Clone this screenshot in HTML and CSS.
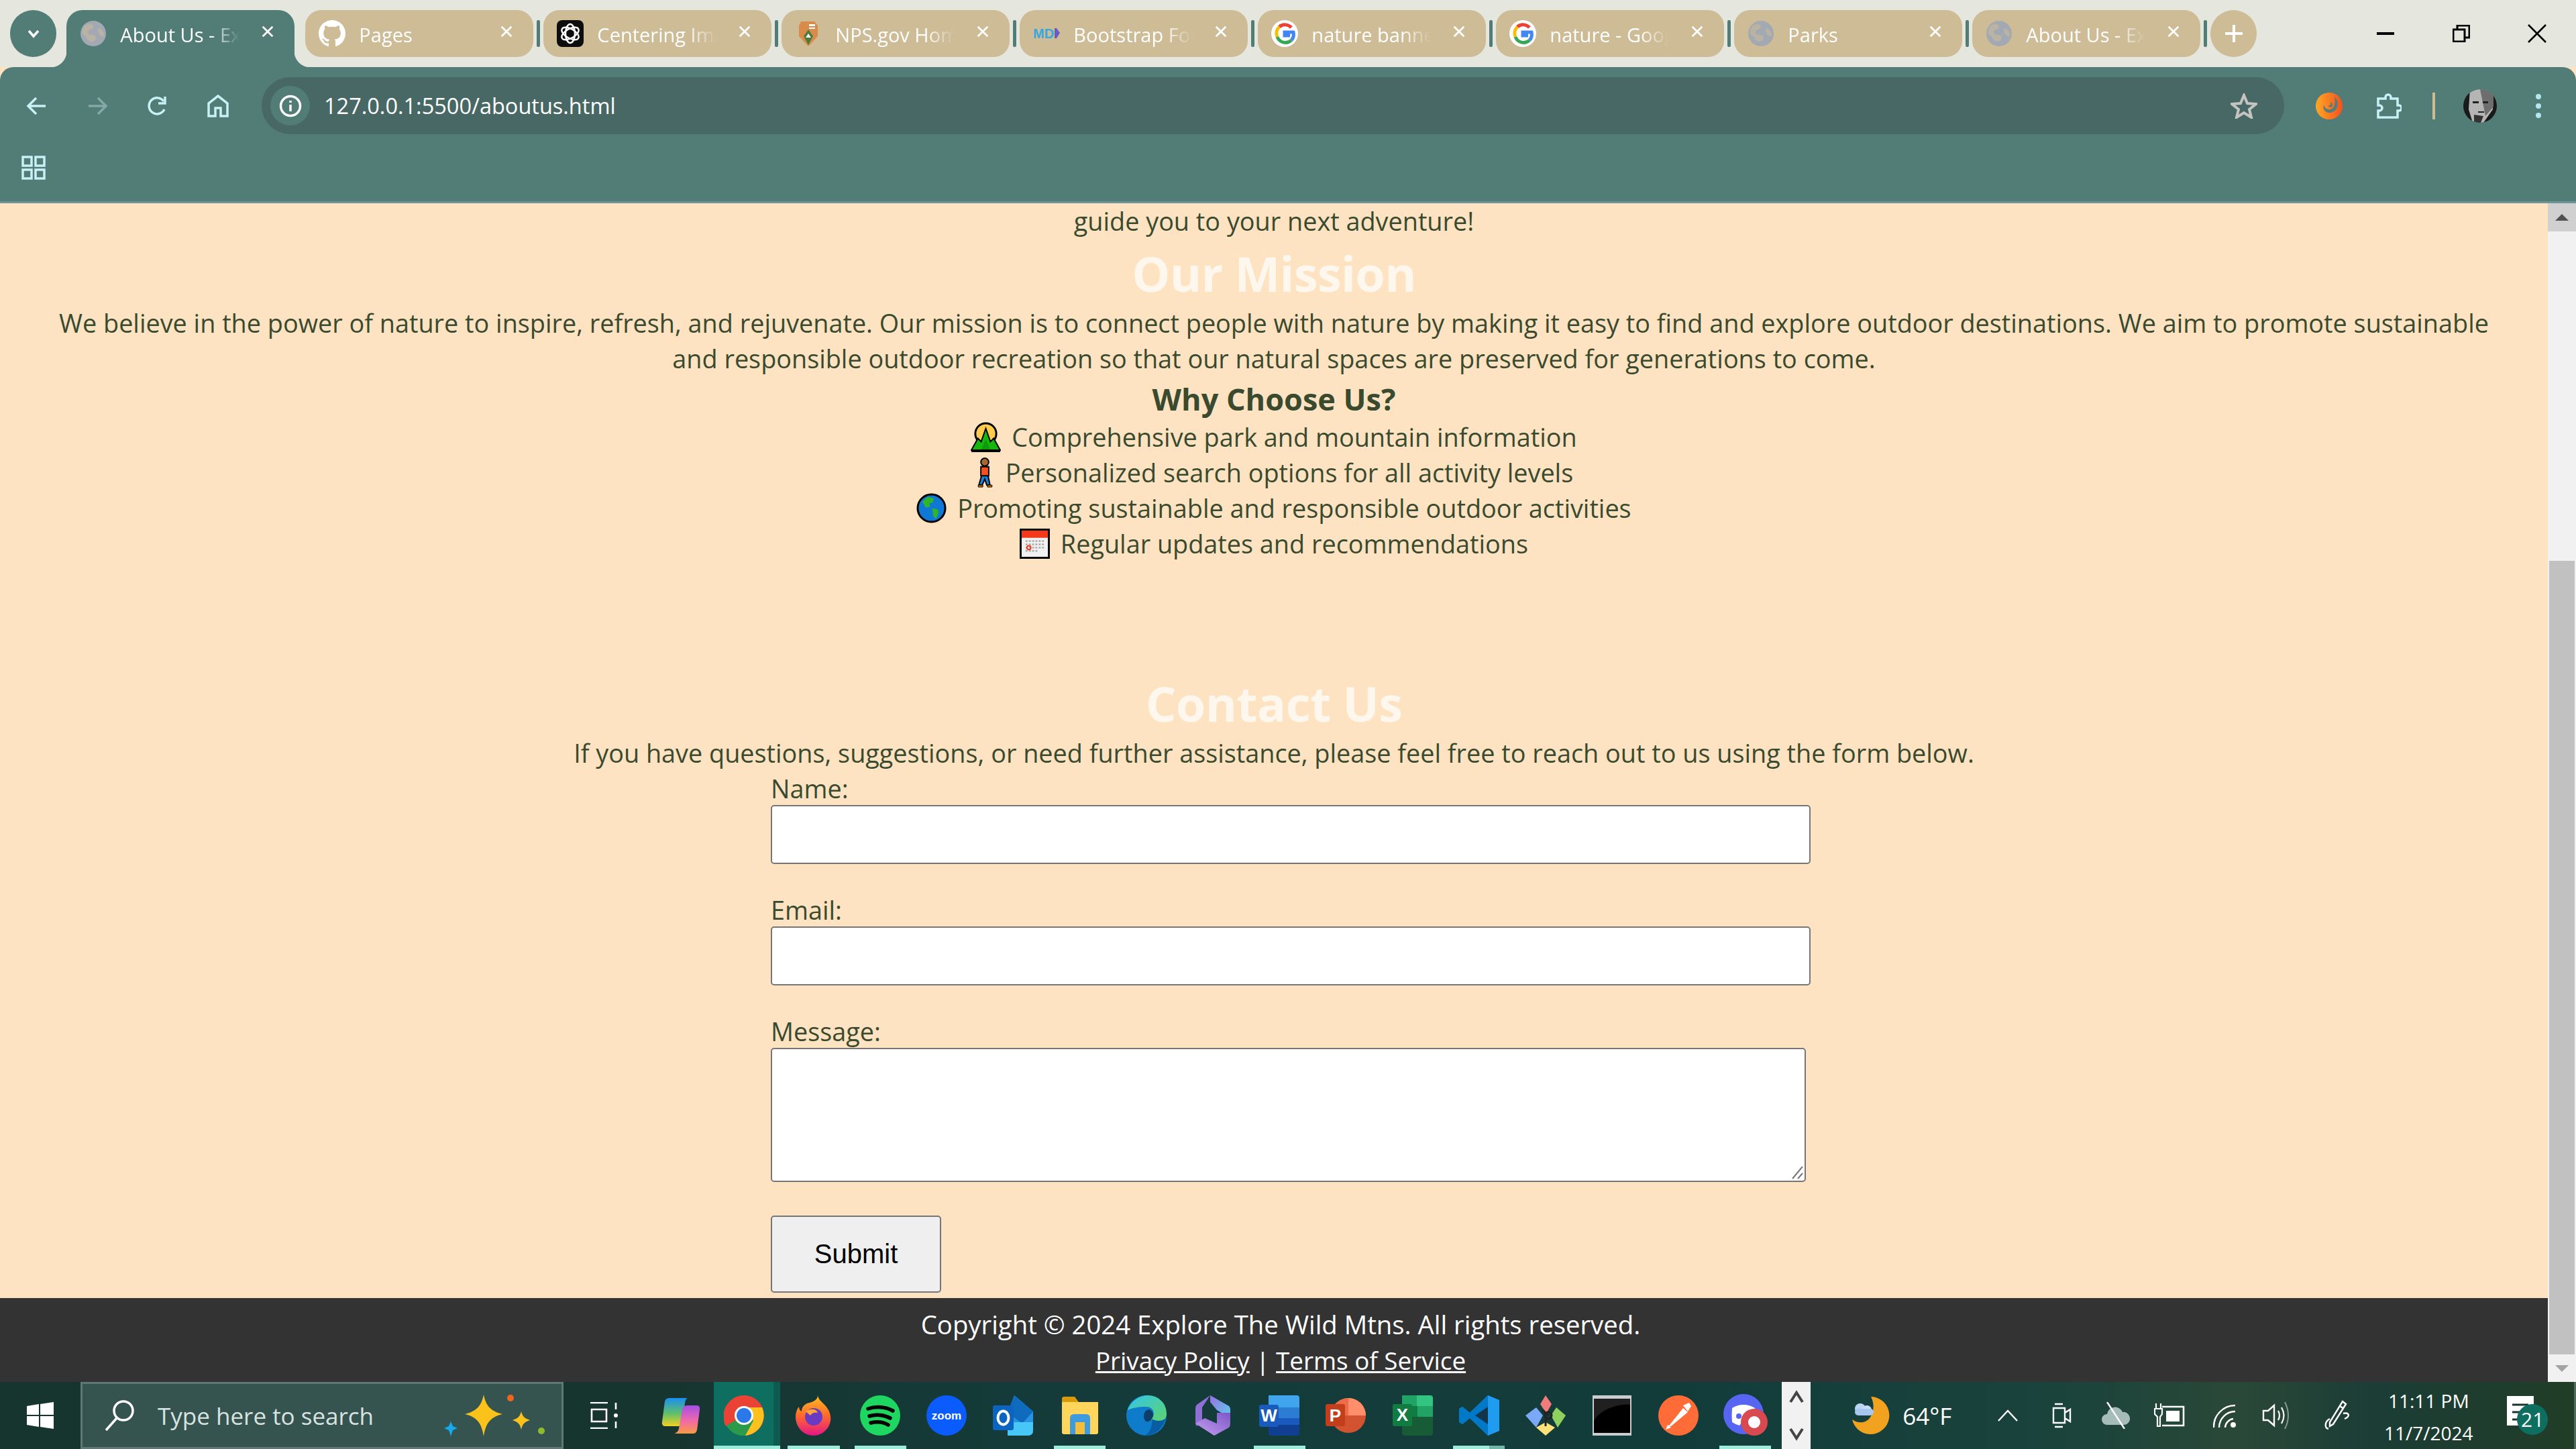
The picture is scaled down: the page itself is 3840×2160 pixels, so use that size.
FILE: index.html
```html
<!DOCTYPE html>
<html lang="en">
<head>
  <meta charset="UTF-8" />
  <title>About Us - Explore The Wild Mtns</title>
  <link rel="stylesheet" href="styles.css">
</head>
<body>

<svg class="defs" width="0" height="0">
  <symbol id="globe" viewBox="0 0 40 40">
    <circle cx="20" cy="20" r="19" fill="#a3a9b3"/>
    <path d="M8 8c6-4 12-2 12 2s-8 3-8 8 6 3 10 5 1 8-3 9c-5 0-8-3-9-6s-5-3-6-6 1-9 4-12zM29 12c3 1 7 6 7 10s-4 2-6 0-5-8-1-10z" fill="#cdbc96" opacity=".55"/>
  </symbol>
  <symbol id="gmark" viewBox="0 0 40 40">
    <circle cx="20" cy="20" r="20" fill="#fff"/>
    <path d="M30 11a13 13 0 0 0-18-1" fill="none" stroke="#ea4335" stroke-width="5"/>
    <path d="M12 10a13 13 0 0 0 -3 15" fill="none" stroke="#fbbc05" stroke-width="5"/>
    <path d="M9 25a13 13 0 0 0 21 5" fill="none" stroke="#34a853" stroke-width="5"/>
    <path d="M30 30a13 13 0 0 0 3-12H20v5h8" fill="none" stroke="#4285f4" stroke-width="5"/>
  </symbol>
  <symbol id="xmark" viewBox="0 0 24 24">
    <path d="M4 4l16 16M20 4L4 20" fill="none" stroke="currentColor" stroke-width="3"/>
  </symbol>
</svg>

<div class="tabstrip">
  <div class="tab-toggle">
    <svg width="24" height="24" viewBox="0 0 24 24"><path d="M5 8l7 8 7-8" fill="none" stroke="#fff" stroke-width="3.5"/></svg>
  </div>
  <div class="tab tab-active">
    <svg class="fav" viewBox="0 0 40 40"><use href="#globe"/></svg>
    <span class="tab-title">About Us - Explore</span>
    <svg class="tab-close"><use href="#xmark"/></svg>
  </div>
  <div class="tab">
    <svg class="fav" viewBox="0 0 16 16"><path fill="#fff" d="M8 0C3.58 0 0 3.58 0 8c0 3.54 2.29 6.53 5.47 7.59.4.07.55-.17.55-.38 0-.19-.01-.82-.01-1.49-2.01.37-2.53-.49-2.69-.94-.09-.23-.48-.94-.82-1.13-.28-.15-.68-.52-.01-.53.63-.01 1.08.58 1.23.82.72 1.21 1.87.87 2.33.66.07-.52.28-.87.51-1.07-1.78-.2-3.64-.89-3.64-3.95 0-.87.31-1.59.82-2.15-.08-.2-.36-1.02.08-2.12 0 0 .67-.21 2.2.82.64-.18 1.32-.27 2-.27.68 0 1.36.09 2 .27 1.53-1.04 2.2-.82 2.2-.82.44 1.1.16 1.92.08 2.12.51.56.82 1.27.82 2.15 0 3.07-1.87 3.75-3.65 3.95.29.25.54.73.54 1.48 0 1.07-.01 1.93-.01 2.2 0 .21.15.46.55.38A8.013 8.013 0 0016 8c0-4.42-3.58-8-8-8z"/></svg>
    <span class="tab-title">Pages</span>
    <svg class="tab-close"><use href="#xmark"/></svg>
  </div>
  <div class="tab-sep"></div>
  <div class="tab">
    <svg class="fav" viewBox="0 0 40 40"><rect width="40" height="40" rx="8" fill="#0d0d0d"/><g fill="none" stroke="#fff" stroke-width="2.4"><ellipse cx="20" cy="20" rx="7" ry="14"/><ellipse cx="20" cy="20" rx="7" ry="14" transform="rotate(60 20 20)"/><ellipse cx="20" cy="20" rx="7" ry="14" transform="rotate(120 20 20)"/></g></svg>
    <span class="tab-title">Centering Images</span>
    <svg class="tab-close"><use href="#xmark"/></svg>
  </div>
  <div class="tab-sep"></div>
  <div class="tab">
    <svg class="fav" viewBox="0 0 40 40"><path d="M9 2h20l5 6v16L20 39 6 24V8z" fill="#d98c4a"/><path d="M13 24l7-10 7 10-7 13z" fill="#4d7a3e"/><path d="M20 20l4 6h-8z" fill="#fff"/><path d="M21 6h9v3h-9zM21 11h9v2h-9z" fill="#fff"/></svg>
    <span class="tab-title">NPS.gov Homepage</span>
    <svg class="tab-close"><use href="#xmark"/></svg>
  </div>
  <div class="tab-sep"></div>
  <div class="tab">
    <svg class="fav" viewBox="0 0 40 40"><text x="0" y="27" class="mdb-text">MD</text><path d="M32 12h3l5 7-5 8h-3z" fill="#6a5cc7"/></svg>
    <span class="tab-title">Bootstrap Footer</span>
    <svg class="tab-close"><use href="#xmark"/></svg>
  </div>
  <div class="tab-sep"></div>
  <div class="tab">
    <svg class="fav" viewBox="0 0 40 40"><use href="#gmark"/></svg>
    <span class="tab-title">nature banner</span>
    <svg class="tab-close"><use href="#xmark"/></svg>
  </div>
  <div class="tab-sep"></div>
  <div class="tab">
    <svg class="fav" viewBox="0 0 40 40"><use href="#gmark"/></svg>
    <span class="tab-title">nature - Google</span>
    <svg class="tab-close"><use href="#xmark"/></svg>
  </div>
  <div class="tab-sep"></div>
  <div class="tab">
    <svg class="fav" viewBox="0 0 40 40"><use href="#globe"/></svg>
    <span class="tab-title">Parks</span>
    <svg class="tab-close"><use href="#xmark"/></svg>
  </div>
  <div class="tab-sep"></div>
  <div class="tab">
    <svg class="fav" viewBox="0 0 40 40"><use href="#globe"/></svg>
    <span class="tab-title">About Us - Explore</span>
    <svg class="tab-close"><use href="#xmark"/></svg>
  </div>
  <div class="tab-sep"></div>
  <div class="tab-new">
    <svg width="30" height="30" viewBox="0 0 30 30"><path d="M15 2v26M2 15h26" stroke="#fff" stroke-width="4"/></svg>
  </div>
  <div class="win-controls">
    <svg width="26" height="26" viewBox="0 0 26 26"><path d="M0 13h26" stroke="#000" stroke-width="4"/></svg>
    <svg width="26" height="26" viewBox="0 0 26 26"><path d="M1 7h17v18H1zM7 7V1h18v18h-7" fill="none" stroke="#000" stroke-width="3"/></svg>
    <svg width="28" height="28" viewBox="0 0 28 28"><path d="M1 1l26 26M27 1L1 27" stroke="#000" stroke-width="2.6"/></svg>
  </div>
</div>

<div class="toolbar">
  <div class="navrow">
    <div class="navbtn"><svg width="32" height="32" viewBox="0 0 32 32"><path d="M29 16H4M15 4L3 16l12 12" fill="none" stroke="#c9f0f5" stroke-width="3.5"/></svg></div>
    <div class="navbtn"><svg width="32" height="32" viewBox="0 0 32 32"><path d="M3 16h25M17 4l12 12-12 12" fill="none" stroke="#85a7a5" stroke-width="3.5"/></svg></div>
    <div class="navbtn"><svg width="34" height="34" viewBox="0 0 34 34"><path d="M27 22a12 12 0 1 1-1-12" fill="none" stroke="#c9f0f5" stroke-width="3.5"/><path d="M28 3v10H18" fill="none" stroke="#c9f0f5" stroke-width="3.5"/></svg></div>
    <div class="navbtn"><svg width="34" height="34" viewBox="0 0 34 34"><path d="M3 32V13L17 2l14 11v19H21V20h-8v12z" fill="none" stroke="#c9f0f5" stroke-width="3.5"/></svg></div>
    <div class="omnibox">
      <div class="omni-info"><svg width="34" height="34" viewBox="0 0 34 34"><circle cx="17" cy="17" r="14.5" fill="none" stroke="#fff" stroke-width="3.5"/><path d="M17 15v10M17 9v3" stroke="#fff" stroke-width="3.5"/></svg></div>
      <span class="omni-url">127.0.0.1:5500/aboutus.html</span>
      <svg class="omni-star" width="40" height="38" viewBox="0 0 40 38"><path d="M20 3l5 12 13 1-10 8 3 12-11-7-11 7 3-12L2 16l13-1z" fill="none" stroke="#c4c4c0" stroke-width="4"/></svg>
    </div>
    <div class="toolicon phoenix">
      <svg width="40" height="40" viewBox="0 0 40 40"><defs><linearGradient id="ph" x1="0" x2="1"><stop offset="0" stop-color="#ffa726"/><stop offset="1" stop-color="#f4511e"/></linearGradient></defs><circle cx="20" cy="20" r="20" fill="url(#ph)"/><path d="M28 6c8 8 6 22-6 24-8 1-12-6-10-12 1 5 5 8 10 7 6-2 8-10 6-19zM22 14c3 1 4 5 2 7s-5 1-5-2c2 1 4 0 3-5z" fill="#5a7c76"/></svg>
    </div>
    <div class="toolicon ext">
      <svg width="38" height="40" viewBox="0 0 38 40"><path d="M3 9h11V7a4 4 0 0 1 8 0v2h10v10h2a4 4 0 0 1 0 8h-2v10H3V27h2a4 4 0 0 0 0-8H3z" fill="none" stroke="#c9f0f5" stroke-width="3.5"/></svg>
    </div>
    <div class="tool-sep"></div>
    <div class="toolicon avatar">
      <svg width="50" height="50" viewBox="0 0 50 50"><defs><clipPath id="av"><circle cx="25" cy="25" r="25"/></clipPath></defs><g clip-path="url(#av)"><rect width="50" height="50" fill="#1a1a1a"/><path d="M10 0h34v30L30 50H14L8 30z" fill="#b5b5b5"/><path d="M25 0h20v26L33 40z" fill="#6e6e6e"/><path d="M14 18h9v3h-9zM29 18h8v3h-8zM22 33h9v2h-9z" fill="#222"/><path d="M16 38l14 2-4 10H16z" fill="#333"/></g></svg>
    </div>
    <div class="toolicon kebab">
      <svg width="10" height="38" viewBox="0 0 10 38"><circle cx="5" cy="5" r="4" fill="#b4e8ee"/><circle cx="5" cy="19" r="4" fill="#b4e8ee"/><circle cx="5" cy="33" r="4" fill="#b4e8ee"/></svg>
    </div>
  </div>
  <div class="bookmarks">
    <svg width="36" height="36" viewBox="0 0 36 36"><path d="M2 2h13v13H2zM21 2h13v13H21zM2 21h13v13H2zM21 21h13v13H21z" fill="none" stroke="#c9f0f5" stroke-width="3.5"/></svg>
  </div>
</div>

<div class="viewport">
  <div class="page">
    <main class="content">
      <p class="line">guide you to your next adventure!</p>
      <h2 class="mission-title">Our Mission</h2>
      <p class="mission-text">We believe in the power of nature to inspire, refresh, and rejuvenate. Our mission is to connect people with nature by making it easy to find and explore outdoor destinations. We aim to promote sustainable and responsible outdoor recreation so that our natural spaces are preserved for generations to come.</p>
      <h3>Why Choose Us?</h3>
      <ul class="reasons">
        <li>
          <svg class="emoji" viewBox="0 0 46 46"><circle cx="23" cy="18" r="16" fill="#ffcb4c" stroke="#000" stroke-width="3"/><path d="M1 43L11 25l5 5 7-20 7 20 5-5 10 18z" fill="#16b80f" stroke="#000" stroke-width="2"/><path d="M16 42l7-16 7 16z" fill="#0f9a0a"/><path d="M1 42h44v4H1z"/></svg>
          Comprehensive park and mountain information
        </li>
        <li>
          <svg class="emoji emoji-walk" viewBox="0 0 30 46"><circle cx="15" cy="7" r="6" fill="#a5682f" stroke="#000" stroke-width="2"/><path d="M9 14h12v14H9z" fill="#f4511e" stroke="#000" stroke-width="2"/><path d="M10 28h10l3 14h-5l-3-9-4 9H6z" fill="#1c7ed6" stroke="#000" stroke-width="2"/><path d="M5 42h7v3H5zM19 42h7v3h-7z" fill="#c97a12" stroke="#000"/></svg>
          Personalized search options for all activity levels
        </li>
        <li>
          <svg class="emoji" viewBox="0 0 46 46"><circle cx="23" cy="23" r="21" fill="#0f78d4" stroke="#000" stroke-width="3"/><path d="M9 13l8-7 10 2-2 6-5 2 1 5-7 1-2-4zM24 23l9 2 1 5-4 9-4-3-1-7z" fill="#2eb52a"/></svg>
          Promoting sustainable and responsible outdoor activities
        </li>
        <li>
          <svg class="emoji" viewBox="0 0 46 46"><rect x="1.5" y="1.5" width="43" height="43" fill="#f1f1f1" stroke="#000" stroke-width="3"/><rect x="3" y="3" width="40" height="11" fill="#f4391a"/><path d="M9 19h28M9 24h28M9 29h28M9 34h20" stroke="#aaa" stroke-width="2.5" stroke-dasharray="3 2"/><circle cx="14" cy="29" r="3" fill="none" stroke="#f4391a" stroke-width="2"/></svg>
          Regular updates and recommendations
        </li>
      </ul>
      <h2 class="contact-title">Contact Us</h2>
      <p class="line">If you have questions, suggestions, or need further assistance, please feel free to reach out to us using the form below.</p>
      <form class="contact-form">
        <label for="name">Name:</label>
        <input class="field" id="name" type="text">
        <label for="email">Email:</label>
        <input class="field" id="email" type="email">
        <label for="message">Message:</label>
        <div class="area-wrap">
          <textarea class="field-area" id="message"></textarea>
          <svg class="area-grip" width="18" height="20" viewBox="0 0 18 20"><path d="M1 19L16 1M9 19l7-8" fill="none" stroke="#767676" stroke-width="2"/></svg>
        </div>
        <button class="submit" type="button">Submit</button>
      </form>
    </main>
    <footer class="site-footer">
      <p>Copyright © 2024 Explore The Wild Mtns. All rights reserved.</p>
      <p class="footer-links"><a href="#">Privacy Policy</a> | <a href="#">Terms of Service</a></p>
    </footer>
  </div>
  <div class="scrollbar">
    <div class="sb-btn"><svg width="20" height="10" viewBox="0 0 20 10"><path d="M10 0l10 10H0z" fill="#505050"/></svg></div>
    <div class="sb-track"><div class="sb-thumb"></div></div>
    <div class="sb-btn"><svg width="20" height="10" viewBox="0 0 20 10"><path d="M10 10L0 0h20z" fill="#a3a3a3"/></svg></div>
  </div>
</div>

<div class="taskbar">
  <div class="start">
    <svg width="40" height="40" viewBox="0 0 40 40"><path d="M0 6l18-3v16H0zM20 3l20-3v19H20zM0 21h18v16L0 34zM20 21h20v19l-20-3z" fill="#fff"/></svg>
  </div>
  <div class="searchbox">
    <svg class="search-ico" width="50" height="50" viewBox="0 0 50 50"><circle cx="31" cy="18" r="14" fill="none" stroke="#fff" stroke-width="3.5"/><path d="M21 29L5 47" stroke="#fff" stroke-width="3.5"/></svg>
    <span class="search-text">Type here to search</span>
    <svg class="sparkle" width="160" height="62" viewBox="0 0 160 62"><path d="M68 0c3 14 8 24 28 29-20 5-25 15-28 33-3-18-8-28-28-33 20-5 25-15 28-29z" fill="#fbc21c"/><path d="M124 25c2 7 4 10 13 13-9 3-11 6-13 14-2-8-4-11-13-14 9-3 11-6 13-13z" fill="#fbc21c"/><path d="M19 40l3 7 7 3-7 3-3 9-3-9-7-3 7-3z" fill="#18a8ef"/><circle cx="108" cy="5" r="5" fill="#f1651c"/><circle cx="154" cy="54" r="5" fill="#8fbc2f"/></svg>
  </div>
  <div class="task-view">
    <svg width="48" height="40" viewBox="0 0 48 40"><path d="M2 1h26M2 39h26M4 11h22v18H4zM40 1v10M40 29v10" fill="none" stroke="#fff" stroke-width="2.6"/><circle cx="40" cy="20" r="3" fill="#fff"/></svg>
  </div>
  <div class="tile">
    <svg width="58" height="55" viewBox="0 0 60 60" preserveAspectRatio="none"><defs><linearGradient id="cp" x1="0" y1="0" x2="0" y2="1"><stop offset="0" stop-color="#1a8ff0"/><stop offset=".55" stop-color="#5fc06a"/><stop offset="1" stop-color="#f5d020"/></linearGradient><linearGradient id="cp2" x1="0" y1="0" x2="0" y2="1"><stop offset="0" stop-color="#a64de8"/><stop offset=".55" stop-color="#f06aa8"/><stop offset="1" stop-color="#f89b40"/></linearGradient></defs><path d="M12 1h28q-3 2-4 9l-3 30q-1 7-8 7H6q-6 0-5-7L5 8q1-7 7-7z" fill="url(#cp)"/><path d="M40 13h14q6 0 5 7l-4 32q-1 7-7 7H20q6-2 7-9l5-30q1-7 8-7z" fill="url(#cp2)"/></svg>
  </div>
  <div class="tile tile-open tile-focus">
    <svg width="60" height="60" viewBox="0 0 60 60"><circle cx="30" cy="30" r="30" fill="#ea4335"/><path d="M30 30L4 45A30 30 0 0 0 30 60z" fill="#34a853"/><path d="M30 30L3 46A30 30 0 0 1 4 15z" fill="#ea4335"/><path d="M30 30L4 45A30 30 0 0 0 32 60L57 18H30z" fill="#2a9b4a"/><path d="M30 18h27A30 30 0 0 1 32 60l12-22z" fill="#fcc11f"/><circle cx="30" cy="30" r="14" fill="#fff"/><circle cx="30" cy="30" r="11" fill="#2b78ea"/></svg>
  </div>
  <div class="tile tile-open">
    <svg width="54" height="60" viewBox="0 0 54 60"><defs><linearGradient id="ff" x1="0" y1="0" x2="0" y2="1"><stop offset="0" stop-color="#ffbe21"/><stop offset=".5" stop-color="#ff6a2b"/><stop offset="1" stop-color="#e31587"/></linearGradient></defs><path d="M33 0c1 9 12 12 17 24 8 19-7 36-23 36S0 47 0 32c0-7 3-13 5-15 0 4 2 6 4 7 0-8 6-12 12-13 7-2 12-5 12-11z" fill="url(#ff)"/><circle cx="27" cy="32" r="13" fill="#6a3bc2"/><path d="M15 24c8-5 16-4 18 2-4-1-9 0-11 4z" fill="#ffa436"/></svg>
  </div>
  <div class="tile tile-open">
    <svg width="60" height="60" viewBox="0 0 60 60"><circle cx="30" cy="30" r="30" fill="#1ed760"/><path d="M12 20c12-4 26-3 37 3M14 31c10-3 22-2 31 3M16 41c8-2 18-2 26 3" fill="none" stroke="#000" stroke-width="5.5" stroke-linecap="round"/></svg>
  </div>
  <div class="tile">
    <svg width="60" height="60" viewBox="0 0 60 60"><circle cx="30" cy="30" r="30" fill="#0b5cff"/><text x="30" y="36" class="zoom-text">zoom</text></svg>
  </div>
  <div class="tile">
    <svg width="62" height="60" viewBox="0 0 62 60"><path d="M32 0l28 24v28q0 8-8 8H22V26z" fill="#2a93e0"/><path d="M32 0l28 24-16 18-22-16z" fill="#0f6bbd"/><path d="M22 40h38v12q0 8-8 8H22z" fill="#47c7f5"/><rect x="0" y="15" width="31" height="37" rx="3" fill="#0a64c0"/><ellipse cx="15.5" cy="33.5" rx="8" ry="10" fill="none" stroke="#fff" stroke-width="4"/></svg>
  </div>
  <div class="tile tile-open">
    <svg width="54" height="56" viewBox="0 0 54 56"><path d="M0 3q0-3 3-3h16l6 8h-25z" fill="#d89a0a"/><path d="M0 8h54v45q0 3-3 3H3q-3 0-3-3z" fill="#ffd55c"/><path d="M12 56V32q0-6 6-6h18q6 0 6 6v24h-8V38H20v18z" fill="#3f9be0"/><rect x="20" y="38" width="14" height="18" fill="#f4bf3a"/></svg>
  </div>
  <div class="tile">
    <svg width="60" height="60" viewBox="0 0 60 60"><defs><linearGradient id="ed" x1="0" y1="0" x2="1" y2="1"><stop offset="0" stop-color="#33c6e8"/><stop offset="1" stop-color="#5fd46a"/></linearGradient></defs><circle cx="30" cy="30" r="30" fill="#0f7ccb"/><path d="M2 22C8 6 22 0 32 0c16 0 28 12 28 27 0 8-6 13-14 13-5 0-9-2-9-5 6-4 6-18-8-18C18 17 8 19 2 22z" fill="url(#ed)"/><path d="M38 35c-6 8-12 4-12-4 0-6 4-10 8-10 6 2 8 9 4 14z" fill="#0c3f68"/><path d="M38 35c6 4 14 4 20 0-4 15-16 25-30 25 6-4 12-14 10-25z" fill="#0a5ca3"/></svg>
  </div>
  <div class="tile">
    <svg width="52" height="60" viewBox="0 0 52 60"><defs><linearGradient id="m3a" x1="0" y1="0" x2="1" y2="1"><stop offset="0" stop-color="#9b6ee0"/><stop offset="1" stop-color="#5ad0f0"/></linearGradient><linearGradient id="m3b" x1="0" y1="1" x2="1" y2="0"><stop offset="0" stop-color="#c9a0f0"/><stop offset="1" stop-color="#7a58c8"/></linearGradient></defs><path d="M22 0L2 14q-2 2-2 6v20q0 4 2 6l8-6V18z" fill="#8f6ed6"/><path d="M22 0l28 16q2 2 2 6v12L32 22 22 10z" fill="url(#m3a)"/><path d="M52 26v16q0 4-2 6L28 60 0 42l14-8 18 8V26z" fill="url(#m3b)"/></svg>
  </div>
  <div class="tile tile-open">
    <svg width="60" height="60" viewBox="0 0 60 60"><path d="M14 0h42q4 0 4 4v14H14z" fill="#41a5ee"/><path d="M14 18h46v16H14z" fill="#2b7cd3"/><path d="M14 34h46v10H14z" fill="#185abd"/><path d="M14 44h46v12q0 4-4 4H18q-4 0-4-4z" fill="#103f91"/><rect x="0" y="14" width="29" height="33" rx="3" fill="#185abd"/><text x="14.5" y="39" class="app-letter">W</text></svg>
  </div>
  <div class="tile">
    <svg width="60" height="60" viewBox="0 0 60 60"><circle cx="34" cy="30" r="26" fill="#d35230"/><path d="M34 4a26 26 0 0 1 26 26H34z" fill="#ff8f6b"/><path d="M8 30a26 26 0 0 1 26-26v26z" fill="#ed6c47"/><rect x="0" y="13" width="29" height="33" rx="3" fill="#c43e1c"/><text x="14.5" y="39" class="app-letter">P</text></svg>
  </div>
  <div class="tile">
    <svg width="60" height="60" viewBox="0 0 60 60"><path d="M14 0h22v16H14z" fill="#21a366"/><path d="M36 0h20q4 0 4 4v12H36z" fill="#33c481"/><path d="M14 16h23v16H14z" fill="#107c41"/><path d="M37 16h23v16H37z" fill="#21a366"/><path d="M14 32h46v24q0 4-4 4H18q-4 0-4-4z" fill="#185c37"/><rect x="0" y="13" width="29" height="33" rx="3" fill="#107c41"/><text x="14.5" y="38" class="app-letter">X</text></svg>
  </div>
  <div class="tile tile-open tile-split">
    <svg width="60" height="60" viewBox="0 0 60 60"><path d="M43 0l17 7v46l-17 7-27-26L5 43 0 40V20l5-3 11 9z" fill="#1f9cf0"/><path d="M43 0v60L16 34 5 43 0 40V20l5-3 11 9z" fill="#0078c8"/><path d="M43 17L24 30l19 13z" fill="#14344a"/></svg>
  </div>
  <div class="tile">
    <svg width="60" height="60" viewBox="0 0 60 60"><path d="M30 0l9 13-8 14-9-14z" fill="#f07c7c"/><path d="M16 18l10 12-10 18L0 30z" fill="#7aa9f7"/><path d="M46 18l14 12-12 18-10-18z" fill="#8fd05f"/><path d="M30 40l14 8-14 12-14-12z" fill="#ffe27a"/><circle cx="34" cy="30" r="5" fill="none" stroke="#222" stroke-width="3"/><path d="M26 22l8 8M30 36v10" stroke="#222" stroke-width="3"/></svg>
  </div>
  <div class="tile">
    <svg width="58" height="60" viewBox="0 0 58 60"><rect width="58" height="60" fill="#c9cdd0"/><rect x="2" y="5" width="54" height="51" fill="#202020"/><path d="M2 56V38C12 20 40 12 56 14v42z" fill="#000"/></svg>
  </div>
  <div class="tile">
    <svg width="60" height="60" viewBox="0 0 60 60"><circle cx="30" cy="30" r="30" fill="#ff6c37"/><path d="M12 47l5-3 20-25 7 6-25 21zM37 15l9-4 3 5-5 8z" fill="#fff"/><path d="M14 44l5 4-8 3z" fill="#fff"/></svg>
  </div>
  <div class="tile tile-open">
    <svg width="66" height="64" viewBox="0 0 66 64"><circle cx="30" cy="30" r="30" fill="#5865f2"/><path d="M13 21q8-5 17-5t17 5q4 10 3 21-6 4-11 5l-3-4H27l-3 4q-5-1-11-5-1-11 0-21z" fill="#fff"/><circle cx="23" cy="33" r="4" fill="#5865f2"/><circle cx="37" cy="33" r="4" fill="#5865f2"/><circle cx="46" cy="42" r="20" fill="#d94a50"/><circle cx="46" cy="42" r="9" fill="#fff"/></svg>
  </div>
  <div class="overflow-arrows">
    <svg width="22" height="20" viewBox="0 0 22 20"><path d="M2 18l9-14 9 14" fill="none" stroke="#444" stroke-width="4"/></svg>
    <svg width="22" height="20" viewBox="0 0 22 20"><path d="M2 2l9 14 9-14" fill="none" stroke="#444" stroke-width="4"/></svg>
  </div>
  <div class="weather">
    <svg width="60" height="60" viewBox="0 0 60 60"><path d="M30 2a28 28 0 1 1-28 34c8 6 20 6 26-2s8-20 2-32z" fill="#f1a31f"/><circle cx="14" cy="20" r="8" fill="#bcd4f5"/><circle cx="24" cy="22" r="7" fill="#c9dcf7"/><rect x="6" y="20" width="28" height="10" rx="5" fill="#a9c6ef"/></svg>
    <span class="temp">64°F</span>
  </div>
  <div class="tray">
    <svg class="tray-caret" width="32" height="18" viewBox="0 0 32 18"><path d="M2 17L16 2l14 15" fill="none" stroke="#fff" stroke-width="2.4"/></svg>
    <svg class="tray-meet" width="30" height="38" viewBox="0 0 30 38"><path d="M3 8h17v22H3zM20 15l8-5v18l-8-5" fill="none" stroke="#fff" stroke-width="2.4"/><path d="M5 2h12M5 36h12" stroke="#fff" stroke-width="2.4"/></svg>
    <svg class="tray-cloud" width="42" height="40" viewBox="0 0 42 40"><path d="M8 34a8 8 0 0 1 0-16 12 12 0 0 1 23-3 9 9 0 0 1 3 19z" fill="#a5bcb8"/><path d="M8 0l26 40" stroke="#fff" stroke-width="2.4"/></svg>
    <svg class="tray-batt" width="46" height="36" viewBox="0 0 46 36"><path d="M12 5h32v28H12" fill="none" stroke="#fff" stroke-width="2.6"/><rect x="18" y="11" width="20" height="16" fill="#fff"/><path d="M3 0v8M10 0v8M1 8h11v8l-3 4v14H5V20l-4-4z" fill="none" stroke="#fff" stroke-width="2.2"/></svg>
    <svg class="tray-wifi" width="36" height="36" viewBox="0 0 36 36"><path d="M1 36A32 32 0 0 1 33 3M9 36A24 24 0 0 1 33 12M18 36a14 14 0 0 1 12-13" fill="none" stroke="#fff" stroke-width="2.4"/><circle cx="30" cy="32" r="4" fill="#fff"/></svg>
    <svg class="tray-vol" width="42" height="44" viewBox="0 0 42 44"><path d="M2 15h7l9-8v30l-9-8H2z" fill="none" stroke="#fff" stroke-width="2.4"/><path d="M24 15q4 7 0 14M29 10q7 12 0 24" fill="none" stroke="#fff" stroke-width="2.2"/><path d="M34 2q10 20 0 40" fill="none" stroke="#7f9a94" stroke-width="2"/></svg>
    <svg class="tray-pen" width="42" height="46" viewBox="0 0 42 46"><path d="M29 2l5 4-19 30-5 3 0-6zM25 9l6 4" fill="none" stroke="#fff" stroke-width="2.4"/><path d="M30 20c8-2 12 4 2 8M10 28c-8 4-8 14-2 15" fill="none" stroke="#fff" stroke-width="2.4"/></svg>
  </div>
  <div class="clock">
    <span>11:11 PM</span>
    <span>11/7/2024</span>
  </div>
  <div class="notify">
    <svg width="40" height="50" viewBox="0 0 40 50"><path d="M0 0h40v44H0z" fill="#fff"/><path d="M8 13h24M8 24h24M8 35h16" stroke="#17352f" stroke-width="3"/></svg>
    <span class="notify-badge">21</span>
  </div>
  <div class="taskbar-edge"></div>
</div>

</body>
</html>
```

FILE: styles.css
```css
* {
  box-sizing: border-box;
}

html,
body {
  margin: 0;
  width: 3840px;
  height: 2160px;
  overflow: hidden;
}

body {
  display: flex;
  flex-direction: column;
  font-family: 'Open Sans', 'Noto Sans', sans-serif;
  background: #fde3c2;
  color: #3a4a2e;
}

.defs {
  position: absolute;
}

/* browser tab strip */
.tabstrip {
  height: 100px;
  flex: none;
  display: flex;
  align-items: flex-start;
  padding: 15px 0 0 15px;
  background: #e5e7de;
}

.tab-toggle {
  width: 70px;
  height: 70px;
  margin-right: 15px;
  border-radius: 35px;
  background: #527d77;
  display: flex;
  align-items: center;
  justify-content: center;
}

.tab {
  position: relative;
  width: 340px;
  height: 70px;
  flex: none;
  display: flex;
  align-items: center;
  padding: 0 20px;
  border-radius: 24px;
  background: #cdbc96;
  color: #fff;
}

.tab-active {
  height: 85px;
  padding-bottom: 15px;
  margin-right: 16px;
  border-radius: 24px 24px 0 0;
  background: #527d77;
}

.tab-active::before,
.tab-active::after {
  content: "";
  position: absolute;
  bottom: 0;
  width: 24px;
  height: 24px;
}

.tab-active::before {
  left: -24px;
  background: radial-gradient(circle at 0 0, transparent 24px, #527d77 25px);
}

.tab-active::after {
  right: -24px;
  background: radial-gradient(circle at 100% 0, transparent 24px, #527d77 25px);
}

.tab .fav {
  width: 40px;
  height: 40px;
  flex: none;
}

.tab-title {
  width: 178px;
  margin-left: 20px;
  margin-right: 1px;
  font-size: 29px;
  line-height: 40px;
  padding-top: 4px;
  white-space: nowrap;
  overflow: hidden;
  mask-image: linear-gradient(to right, #000 75%, transparent 100%);
}

.tab-close {
  width: 22px;
  height: 22px;
  margin-left: 30px;
  margin-top: -6px;
  color: #fff;
  flex: none;
}

.tab-sep {
  width: 5px;
  height: 40px;
  margin: 15px 5px 0;
  flex: none;
  border-radius: 2px;
  background: #527d77;
}

.tab-new {
  width: 69px;
  height: 70px;
  flex: none;
  border-radius: 35px;
  background: #cdbc96;
  display: flex;
  align-items: center;
  justify-content: center;
}

.win-controls {
  margin-left: auto;
  width: 478px;
  height: 70px;
  padding: 0 44px 0 179px;
  display: flex;
  align-items: center;
  justify-content: space-between;
}

/* toolbar */
.toolbar {
  height: 203px;
  flex: none;
  background: #527d77;
  border-bottom: 3px solid #6d9599;
  border-radius: 20px 20px 0 0;
  padding-top: 15px;
}

.navrow {
  height: 85px;
  display: flex;
  align-items: center;
  padding-left: 10px;
}

.navbtn {
  width: 90px;
  display: flex;
  justify-content: center;
}

.omnibox {
  width: 3015px;
  height: 85px;
  margin-left: 20px;
  margin-right: 47px;
  padding-left: 13px;
  padding-right: 40px;
  border-radius: 43px;
  background: #486865;
  display: flex;
  align-items: center;
}

.omni-info {
  width: 59px;
  height: 59px;
  border-radius: 50%;
  background: #527d77;
  display: flex;
  align-items: center;
  justify-content: center;
}

.omni-url {
  margin-left: 21px;
  font-size: 32.5px;
  color: #fff;
}

.omni-star {
  margin-left: auto;
}

.toolicon {
  display: flex;
  align-items: center;
  justify-content: center;
}

.phoenix {
  width: 40px;
}

.ext {
  width: 38px;
  margin-left: 50px;
}

.tool-sep {
  width: 4px;
  height: 40px;
  margin-left: 46px;
  background: #cdbc96;
}

.avatar {
  width: 50px;
  margin-left: 42px;
}

.kebab {
  width: 10px;
  margin-left: 57px;
}

.bookmarks {
  height: 100px;
  display: flex;
  align-items: center;
  padding-left: 32px;
}

/* page area */
.viewport {
  flex: 1;
  min-height: 0;
  display: flex;
}

.page {
  width: 3798px;
  display: flex;
  flex-direction: column;
  background: #fde3c2;
  font-size: 37.8px;
  line-height: 53px;
}

.content {
  flex: 1;
  text-align: center;
}

.content p {
  margin: 0;
}

h2 {
  margin: 0;
  font-size: 72px;
  letter-spacing: -0.7px;
  line-height: 90px;
  color: #fef7ed;
}

.mission-title {
  margin-top: 6px;
}

.mission-text {
  padding: 3px 60px 0;
}

h3 {
  margin: 7px 0 4px;
  font-size: 45px;
  line-height: 53px;
}

.reasons {
  list-style: none;
  margin: 0;
  padding: 0;
}

.emoji {
  width: 45px;
  height: 45px;
  margin-right: 6px;
  vertical-align: -8px;
}

.emoji-walk {
  width: 30px;
}

.contact-title {
  margin-top: 166px;
  margin-bottom: 3px;
}

.contact-form {
  width: 1500px;
  margin: 0 auto;
  padding-top: 2px;
  text-align: left;
}

.contact-form label {
  display: block;
  line-height: 49px;
}

.field {
  display: block;
  width: 1550px;
  height: 88px;
  margin-bottom: 44px;
  border: 2.5px solid #767676;
  border-radius: 5px;
  background: #fff;
}

.area-wrap {
  position: relative;
  width: 1543px;
  height: 200px;
}

.field-area {
  display: block;
  width: 100%;
  height: 100%;
  border: 2.5px solid #767676;
  border-radius: 5px;
  background: #fff;
  resize: none;
}

.area-grip {
  position: absolute;
  right: 3px;
  bottom: 4px;
}

.submit {
  display: block;
  width: 254px;
  height: 115px;
  margin-top: 50px;
  border: 2.5px solid #767676;
  border-radius: 5px;
  background: #efefef;
  color: #000;
  font-family: 'Liberation Sans', Arial, sans-serif;
  font-size: 40px;
}

.site-footer {
  height: 125px;
  flex: none;
  padding: 12px 0 0 20px;
  background: #333;
  color: #fff;
  font-size: 38.3px;
  text-align: center;
}

.site-footer p {
  margin: 0;
  line-height: 54px;
}

.footer-links {
  font-size: 36.8px;
}

.site-footer a {
  color: #fff;
}

.scrollbar {
  width: 42px;
  display: flex;
  flex-direction: column;
  background: #f1f1f1;
}

.sb-btn {
  height: 42px;
  flex: none;
  display: flex;
  align-items: center;
  justify-content: center;
  background: #d0d0d0;
}

.sb-btn:last-child {
  height: 41px;
  background: #f1f1f1;
}

.sb-track {
  flex: 1;
  padding: 491px 2px 0;
  display: flex;
}

.sb-thumb {
  flex: 1;
  background: #c1c1c1;
}

/* windows taskbar */
.taskbar {
  position: relative;
  height: 100px;
  flex: none;
  display: flex;
  align-items: center;
  color: #fff;
  background: linear-gradient(90deg, #17352f 0, #17352f 25%, #143b3a 40%, #123c3a 65%, #1a433c 80%, #2a4837 87%, #1b3d36 92%, #213d27 100%);
}

.start {
  width: 120px;
  display: flex;
  justify-content: center;
}

.searchbox {
  width: 720px;
  height: 100px;
  padding: 0 24px 0 30px;
  display: flex;
  align-items: center;
  background: #36544f;
  border: 3px solid #5f7873;
}

.search-text {
  margin-left: 32px;
  font-size: 35px;
  color: #d8e2e0;
}

.sparkle {
  margin-left: auto;
}

.task-view {
  width: 87px;
  margin-left: 38px;
  display: flex;
}

.tile {
  width: 99.2px;
  height: 100px;
  flex: none;
  display: flex;
  align-items: center;
  justify-content: center;
  position: relative;
}

.tile-open::after {
  content: "";
  position: absolute;
  left: 11px;
  right: 11px;
  bottom: 0;
  height: 5px;
  background: #9decdb;
}

.tile-focus {
  background: #0e6e60;
  border-right: 10px solid #0d5b50;
}

.tile-focus::after {
  left: 0;
  right: -10px;
}

.tile-split::after {
  background: linear-gradient(90deg, #9decdb 70%, #74b5a9 70%);
}

.mdb-text {
  font: bold 20px 'Liberation Sans', sans-serif;
  fill: #36a9e0;
}

.zoom-text {
  font: bold 17px 'Liberation Sans', sans-serif;
  fill: #fff;
  text-anchor: middle;
}

.app-letter {
  font: bold 26px 'Liberation Sans', sans-serif;
  fill: #fff;
  text-anchor: middle;
}

.overflow-arrows {
  width: 43px;
  height: 100px;
  margin-left: 5px;
  flex: none;
  padding: 12px 0;
  display: flex;
  flex-direction: column;
  align-items: center;
  justify-content: space-between;
  background: #f1f1f1;
}

.weather {
  margin-left: 60px;
  display: flex;
  align-items: center;
  gap: 17px;
}

.temp {
  font-size: 35px;
}

.tray {
  margin-left: 68px;
  display: flex;
  align-items: center;
}

.tray svg {
  flex: none;
}

.tray-meet {
  margin-left: 49px;
}

.tray-cloud {
  margin-left: 45px;
}

.tray-batt {
  margin-left: 36px;
}

.tray-wifi {
  margin-left: 42px;
}

.tray-vol {
  margin-left: 37px;
}

.tray-pen {
  margin-left: 49px;
}

.clock {
  margin-left: 20px;
  width: 190px;
  padding-top: 4px;
  display: flex;
  flex-direction: column;
  gap: 12px;
  align-items: center;
  font-size: 28px;
  line-height: 36px;
}

.notify {
  position: relative;
  margin-left: 22px;
  margin-top: -8px;
  width: 40px;
  height: 50px;
}

.notify-badge {
  position: absolute;
  left: 15px;
  top: 12px;
  width: 46px;
  height: 46px;
  border-radius: 50%;
  background: #0e6e60;
  font-size: 30px;
  line-height: 46px;
  text-align: center;
}

.taskbar-edge {
  position: absolute;
  right: 0;
  top: 0;
  width: 3px;
  height: 100px;
  background: #4f6a60;
}
```
